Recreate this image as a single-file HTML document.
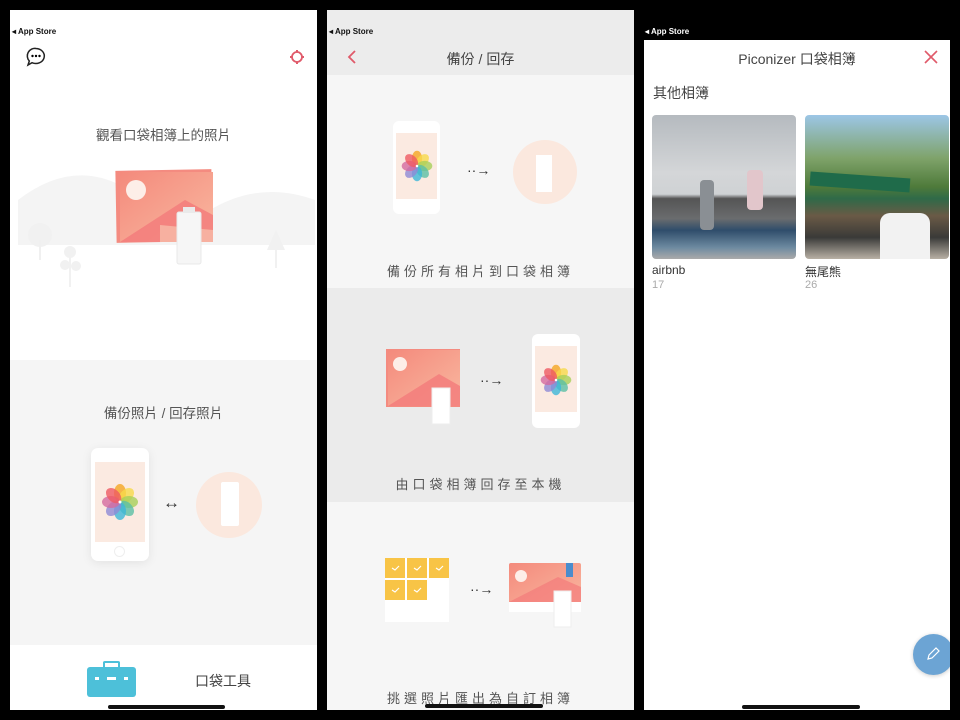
<!DOCTYPE html>
<html><head><meta charset="utf-8"><style>
*{margin:0;padding:0;box-sizing:border-box}
body{width:960px;height:720px;background:#000;position:relative;overflow:hidden;font-family:"Liberation Sans","Noto Sans CJK TC",sans-serif}
.a{position:absolute}
.t{position:absolute;color:#555;font-size:13px;text-align:center;white-space:nowrap}
.as{position:absolute;font-size:8px;font-weight:bold;color:#111}
.hb{position:absolute;height:4px;background:#111;border-radius:2px}
.ar{position:absolute;font-size:14px;color:#333}
</style></head><body>
<svg width="0" height="0" style="position:absolute"><defs>
<g id="fl">
<ellipse cx="0" cy="-9" rx="6" ry="9" fill="#f5a623" opacity=".8"/>
<ellipse cx="0" cy="-9" rx="6" ry="9" fill="#f8d94b" opacity=".8" transform="rotate(45)"/>
<ellipse cx="0" cy="-9" rx="6" ry="9" fill="#a7d05a" opacity=".8" transform="rotate(90)"/>
<ellipse cx="0" cy="-9" rx="6" ry="9" fill="#5bbfa5" opacity=".8" transform="rotate(135)"/>
<ellipse cx="0" cy="-9" rx="6" ry="9" fill="#3db6d8" opacity=".8" transform="rotate(180)"/>
<ellipse cx="0" cy="-9" rx="6" ry="9" fill="#8f8ad6" opacity=".8" transform="rotate(225)"/>
<ellipse cx="0" cy="-9" rx="6" ry="9" fill="#d56aa0" opacity=".8" transform="rotate(270)"/>
<ellipse cx="0" cy="-9" rx="6" ry="9" fill="#ef5a63" opacity=".8" transform="rotate(315)"/>
<circle r="1.5" fill="#fff"/>
</g>
<linearGradient id="pk" x1="0" y1="0" x2="1" y2="1"><stop offset="0" stop-color="#f48a7c"/><stop offset="1" stop-color="#f9b8a0"/></linearGradient>
</defs></svg>

<!-- PANEL 1 -->
<div class="a" style="left:10px;top:10px;width:307px;height:700px;background:#fff"></div>
<div class="a" style="left:10px;top:360px;width:307px;height:285px;background:#f5f5f5"></div>
<div class="as" style="left:12px;top:27px">◂ App Store</div>
<svg class="a" style="left:25px;top:46px" width="22" height="22" viewBox="0 0 22 22"><path d="M11 2.5a8.5 7.5 0 1 1-4 14.2L3 19l1.3-4A7.5 7.5 0 0 1 11 2.5z" fill="none" stroke="#222" stroke-width="1.5"/><circle cx="7.5" cy="10" r="1.2"/><circle cx="11" cy="10" r="1.2"/><circle cx="14.5" cy="10" r="1.2"/></svg>
<svg class="a" style="left:289px;top:49px" width="16" height="16" viewBox="0 0 16 16"><circle cx="8" cy="8" r="5" fill="none" stroke="#e05a6a" stroke-width="1.8"/><g stroke="#e05a6a" stroke-width="2"><path d="M8 1v2M8 13v2M1 8h2M13 8h2"/></g></svg>
<div class="t" style="left:10px;width:307px;top:124px;font-size:13.5px">觀看口袋相簿上的照片</div>
<svg class="a" style="left:10px;top:150px" width="307" height="150">
<path d="M8 50 Q60 10 110 35 L110 95 L8 95Z" fill="#f4f4f4"/>
<path d="M200 60 Q250 30 305 50 L305 95 L200 95Z" fill="#f4f4f4"/>
<rect x="8" y="60" width="297" height="35" fill="#f4f4f4"/>
<circle cx="30" cy="85" r="12" fill="#f1f1f1"/><rect x="29" y="90" width="2" height="20" fill="#f0f0f0"/>
<circle cx="60" cy="102" r="6" fill="#f1f1f1"/><circle cx="55" cy="115" r="5" fill="#f1f1f1"/><circle cx="66" cy="116" r="5" fill="#f1f1f1"/><rect x="59" y="102" width="2" height="35" fill="#f1f1f1"/>
<path d="M266 80 L275 100 L257 100Z" fill="#f1f1f1"/><rect x="265" y="100" width="2" height="18" fill="#f1f1f1"/>
<rect x="106" y="20" width="96" height="72" fill="#f48b80" transform="rotate(-1 154 56)"/>
<rect x="110" y="22" width="93" height="70" fill="url(#pk)"/>
<circle cx="126" cy="40" r="10" fill="#fdeee8"/>
<path d="M110 92 L175 50 L203 65 L203 92Z" fill="#f37a7a" opacity=".8"/>
<path d="M150 75 L150 92 L203 92 L203 80Z" fill="#f7b0a0"/>
<rect x="167" y="62" width="24" height="52" rx="2" fill="#f6f6f6" stroke="#e8e8e8"/>
<rect x="173" y="57" width="12" height="6" fill="#eaeaea"/>
</svg>
<div class="t" style="left:10px;width:307px;top:402px;font-size:13.5px">備份照片 / 回存照片</div>
<div class="a" style="left:91px;top:448px;width:58px;height:113px;background:#fff;border-radius:7px;box-shadow:0 2px 10px rgba(0,0,0,.08)"></div>
<div class="a" style="left:95px;top:462px;width:50px;height:80px;background:#fbeae1"></div>
<div class="a" style="left:114px;top:546px;width:11px;height:11px;border-radius:50%;border:1px solid #eee"></div>
<svg class="a" style="left:100px;top:482px" width="40" height="40" viewBox="-20 -20 40 40"><use href="#fl"/></svg>
<div class="a" style="left:163px;top:493px;font-size:17px;color:#333">↔</div>
<div class="a" style="left:196px;top:472px;width:66px;height:66px;border-radius:50%;background:#fbe8de"></div>
<div class="a" style="left:221px;top:482px;width:18px;height:44px;background:#fff;border-radius:2px"></div>
<div class="a" style="left:87px;top:667px;width:49px;height:30px;background:#4dc0d9;border-radius:3px"></div>
<div class="a" style="left:103px;top:661px;width:17px;height:8px;border:2px solid #4dc0d9;border-bottom:none;border-radius:2px"></div>
<div class="a" style="left:95px;top:677px;width:4px;height:3px;background:#fff"></div>
<div class="a" style="left:107px;top:677px;width:9px;height:3px;background:#fff"></div>
<div class="a" style="left:124px;top:677px;width:4px;height:3px;background:#fff"></div>
<div class="t" style="left:195px;top:671px;font-size:14px;color:#444">口袋工具</div>
<div class="hb" style="left:108px;top:705px;width:117px"></div>

<!-- PANEL 2 -->
<div class="a" style="left:327px;top:10px;width:307px;height:700px;background:#f6f6f6"></div>
<div class="a" style="left:327px;top:10px;width:307px;height:65px;background:#ececec"></div>
<div class="a" style="left:327px;top:288px;width:307px;height:214px;background:#ebebeb"></div>
<div class="as" style="left:329px;top:27px">◂ App Store</div>
<svg class="a" style="left:346px;top:49px" width="12" height="16"><path d="M9 2 L3 8 L9 14" fill="none" stroke="#e05a6a" stroke-width="1.8"/></svg>
<div class="t" style="left:327px;width:307px;top:49px;font-size:14px;color:#444">備份 / 回存</div>
<div class="a" style="left:393px;top:121px;width:47px;height:93px;background:#fff;border-radius:6px"></div>
<div class="a" style="left:396px;top:133px;width:41px;height:66px;background:#fbeae1"></div>
<svg class="a" style="left:400px;top:149px" width="34" height="34" viewBox="-20 -20 40 40"><use href="#fl"/></svg>
<div class="ar" style="left:467px;top:162px">··→</div>
<div class="a" style="left:513px;top:140px;width:64px;height:64px;border-radius:50%;background:#fbe8de"></div>
<div class="a" style="left:536px;top:155px;width:16px;height:37px;background:#fff"></div>
<div class="t" style="left:327px;width:307px;top:261px;letter-spacing:4px">備份所有相片到口袋相簿</div>
<svg class="a" style="left:384px;top:346px" width="80" height="80">
<rect x="2" y="3" width="74" height="58" fill="#f48b80"/><rect x="4" y="4" width="72" height="56" fill="url(#pk)"/>
<circle cx="16" cy="18" r="7" fill="#fdeee8"/><path d="M4 60 L55 28 L76 40 L76 60Z" fill="#f37a7a" opacity=".8"/>
<rect x="48" y="42" width="18" height="36" fill="#fff" stroke="#eee"/></svg>
<div class="ar" style="left:480px;top:372px">··→</div>
<div class="a" style="left:532px;top:334px;width:48px;height:94px;background:#fff;border-radius:6px"></div>
<div class="a" style="left:535px;top:346px;width:42px;height:66px;background:#fbeae1"></div>
<svg class="a" style="left:539px;top:363px" width="34" height="34" viewBox="-20 -20 40 40"><use href="#fl"/></svg>
<div class="t" style="left:327px;width:307px;top:474px;letter-spacing:4px">由口袋相簿回存至本機</div>
<svg class="a" style="left:385px;top:558px" width="66" height="66">
<rect width="64" height="64" fill="#fff"/>
<g fill="#f8c446"><rect x="0" y="0" width="20" height="20"/><rect x="22" y="0" width="20" height="20"/><rect x="44" y="0" width="20" height="20"/><rect x="0" y="22" width="20" height="20"/><rect x="22" y="22" width="20" height="20"/></g>
<g fill="none" stroke="#fff" stroke-width="1.2"><path d="M7 10l3 2 4-4M29 10l3 2 4-4M51 10l3 2 4-4M7 32l3 2 4-4M29 32l3 2 4-4"/></g></svg>
<div class="ar" style="left:470px;top:581px">··→</div>
<svg class="a" style="left:508px;top:562px" width="76" height="66">
<rect x="1" y="1" width="72" height="44" rx="2" fill="url(#pk)"/><rect x="1" y="40" width="72" height="10" fill="#fff"/>
<circle cx="13" cy="14" r="6" fill="#fdeee8"/><path d="M1 40 L50 15 L73 25 L73 40Z" fill="#f37a7a" opacity=".7"/>
<rect x="58" y="1" width="7" height="14" fill="#4a8ccc"/>
<rect x="46" y="29" width="17" height="36" fill="#fff" stroke="#eee"/></svg>
<div class="t" style="left:327px;width:307px;top:688px;letter-spacing:4px">挑選照片匯出為自訂相簿</div>
<div class="hb" style="left:425px;top:704px;width:118px"></div>

<!-- PANEL 3 -->
<div class="a" style="left:644px;top:40px;width:306px;height:670px;background:#fff"></div>
<div class="as" style="left:645px;top:27px;color:#fff">◂ App Store</div>
<div class="t" style="left:644px;width:306px;top:49px;font-size:14px;color:#444">Piconizer 口袋相簿</div>
<svg class="a" style="left:924px;top:50px" width="14" height="14"><path d="M1 1L13 13M13 1L1 13" stroke="#e05a6a" stroke-width="1.6"/></svg>
<div class="t" style="left:653px;top:83px;font-size:14px;color:#444;text-align:left">其他相簿</div>
<div class="a" style="left:652px;top:115px;width:144px;height:144px;border-radius:4px;overflow:hidden;background:linear-gradient(#b5babf 0%,#d4d6d8 40%,#cfd2d4 55%,#555 58%,#6a6c6e 72%,#2f4d6b 80%,#6d8aa0 92%,#aaa 100%)">
<div class="a" style="left:48px;top:65px;width:14px;height:50px;background:#8a8f94;border-radius:4px"></div>
<div class="a" style="left:95px;top:55px;width:16px;height:40px;background:#e2c6cb;border-radius:4px"></div></div>
<div class="a" style="left:805px;top:115px;width:144px;height:144px;border-radius:4px;overflow:hidden;background:linear-gradient(#9cc6e6 0%,#7fa36a 30%,#4e7a3a 50%,#2f6a48 58%,#6a5a46 70%,#3a3a38 85%,#b8b0a4 100%)">
<div class="a" style="left:5px;top:60px;width:100px;height:14px;background:#1f6b4a;transform:rotate(4deg)"></div>
<div class="a" style="left:75px;top:98px;width:50px;height:46px;background:#f2f2f2;border-radius:10px 10px 0 0"></div></div>
<div class="t" style="left:652px;top:263px;font-size:12px;color:#333;text-align:left">airbnb</div>
<div class="t" style="left:652px;top:279px;font-size:11px;color:#aaa;text-align:left">17</div>
<div class="t" style="left:805px;top:263px;font-size:12px;color:#333;text-align:left">無尾熊</div>
<div class="t" style="left:805px;top:279px;font-size:11px;color:#aaa;text-align:left">26</div>
<div class="a" style="left:913px;top:634px;width:41px;height:41px;border-radius:50%;background:#6ca4d4;box-shadow:0 1px 4px rgba(0,0,0,.2)"></div>
<svg class="a" style="left:925px;top:646px" width="16" height="16"><path d="M3 13l1-4 7-7 3 3-7 7z" fill="none" stroke="#fff" stroke-width="1.2"/></svg>
<div class="a" style="left:950px;top:40px;width:10px;height:680px;background:#000"></div>
<div class="hb" style="left:742px;top:705px;width:118px"></div>
</body></html>
